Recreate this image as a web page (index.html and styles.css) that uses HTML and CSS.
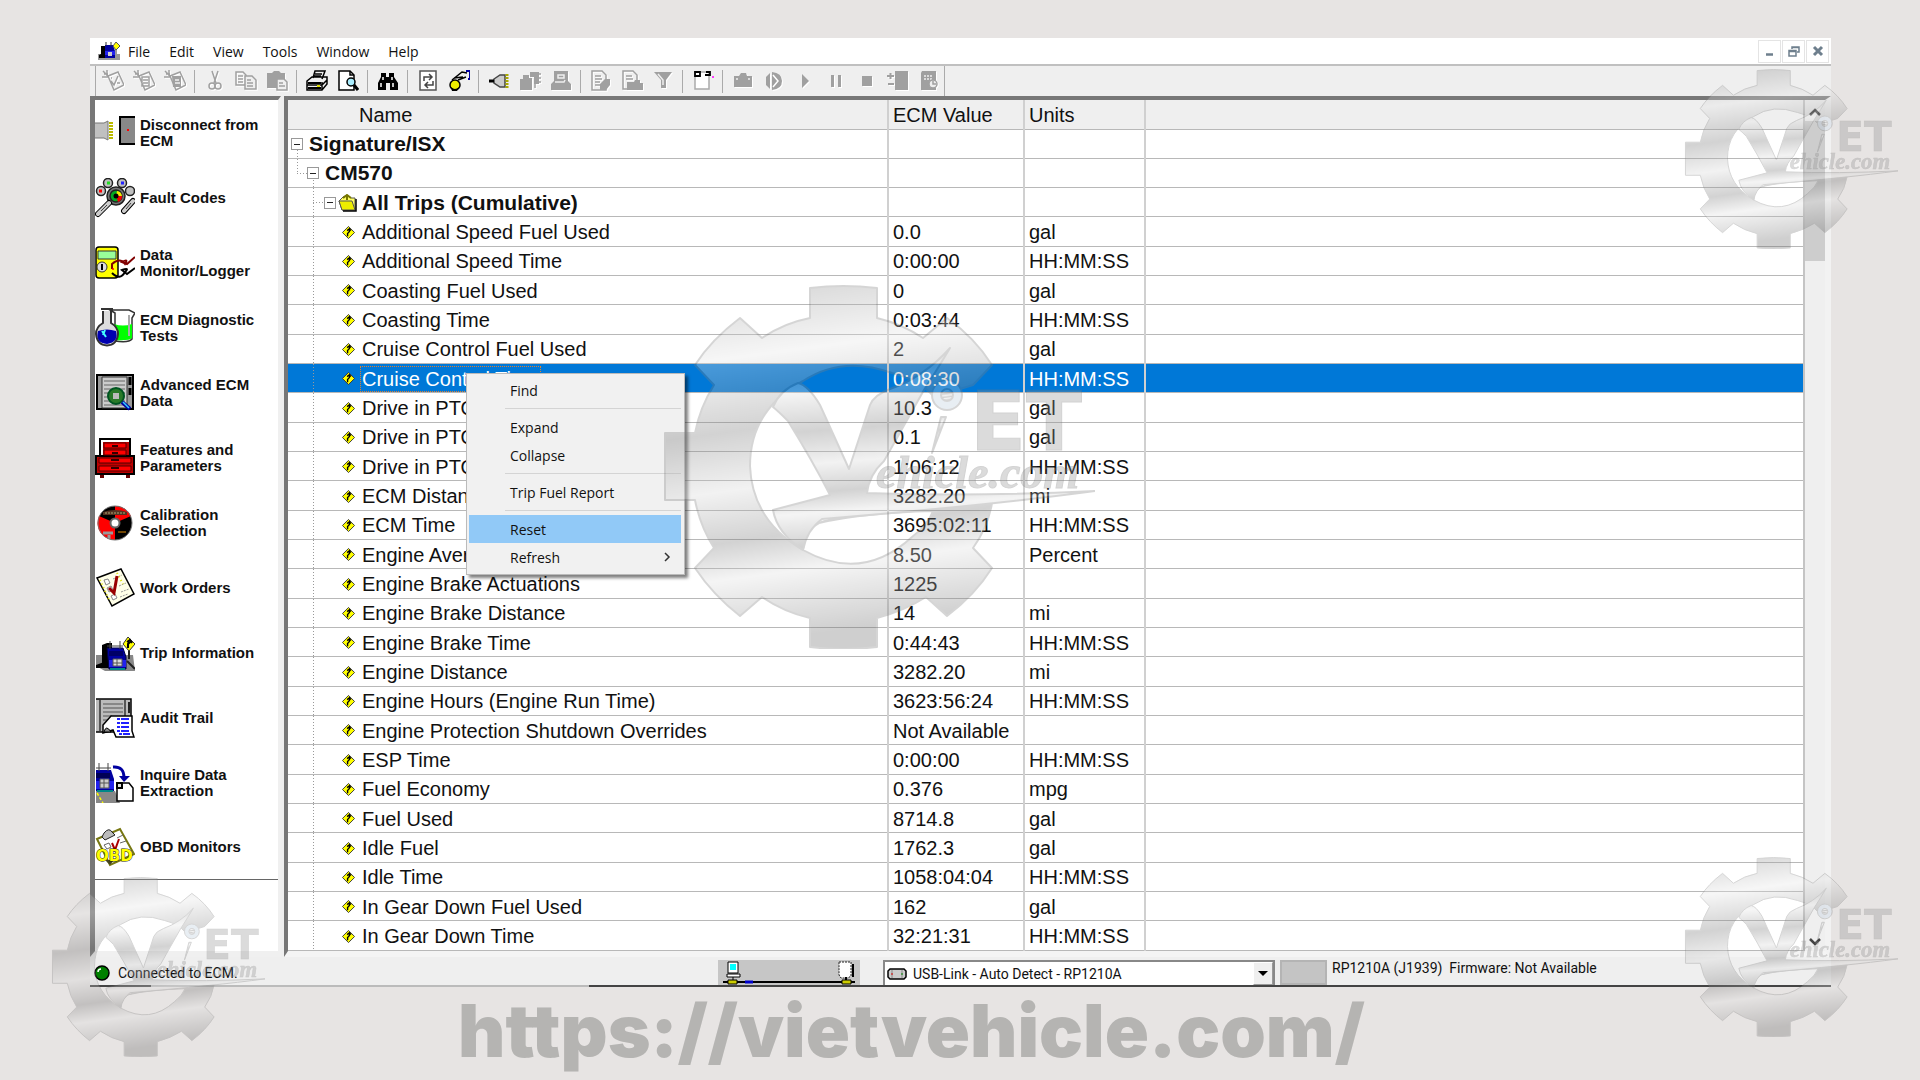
FILE: index.html
```html
<!DOCTYPE html>
<html lang="en">
<head>
  <meta charset="UTF-8" />
  <meta name="viewport" content="width=device-width, initial-scale=1" />
  <title>Trip Information</title>
  <link rel="stylesheet" href="styles.css">
</head>
<body>
  <!-- shared shapes -->
  <svg class="defs" width="0" height="0" aria-hidden="true">
    <defs>
      <linearGradient id="metal" x1="0" y1="0" x2="0.12" y2="1">
        <stop offset="0" stop-color="#777" />
        <stop offset="0.22" stop-color="#e6e6e6" />
        <stop offset="0.42" stop-color="#777" />
        <stop offset="0.58" stop-color="#d8d8d8" />
        <stop offset="0.72" stop-color="#777" />
        <stop offset="0.82" stop-color="#e0e0e0" />
        <stop offset="1" stop-color="#6c6c6c" />
      </linearGradient>
      <symbol id="trip" viewBox="0 0 14 14">
        <path d="M7 0.5 13.5 7 7 13.5 0.5 7Z" fill="#ff0" stroke="#333" />
        <path d="M6 11V8L8 6V3M5.500 5 8 3 9.500 5" fill="none" stroke="#000" stroke-width="1.500" />
      </symbol>
      <symbol id="logo" viewBox="0 0 433 364">
        <g fill="url(#metal)" stroke="#808080" stroke-width="2" stroke-linejoin="round">
          <path fill-rule="evenodd" d="M148 3Q181 -1 215 3V33Q240 39 261 53L285 33Q313 53 330 80L311 100L272 112Q258 95 230 88Q180 70 141 96Q88 125 88 181Q90 235 141 265Q143 245 157 238Q180 228 330 218Q326 242 311 263L330 283Q313 310 285 331L264 312Q242 326 215 333V362Q181 366 148 362V333Q122 327 100 312L78 331Q51 310 33 283L52 263Q38 241 33 215H3V148H33Q38 122 52 100L33 80Q49 55 78 33L100 53Q122 38 148 33ZM141 265Q200 298 250 252Q266 240 271 226Q200 228 157 238Q143 245 141 265Z" />
          <path d="M111 122Q118 105 136 98Q146 100 158 120L187 184L208 120Q212 110 228 104Q262 92 288 63Q278 80 262 105L222 176Q207 190 205 208Q310 212 433 206Q330 220 160 234Q145 245 141 265Q115 248 111 225L168 210Q150 175 126 136Q116 126 111 122Z" />
          <circle cx="285" cy="110" r="15" fill="#bcd" />
          <circle cx="285" cy="110" r="6" />
          <path d="M279 132 270 168 284 132Z" />
        </g>
        <g fill="#909090" stroke="#777" stroke-width="1">
          <text x="308" y="165" class="logo-et">ET</text>
          <text x="214" y="203" class="logo-com">ehicle.com</text>
        </g>
      </symbol>
    </defs>
  </svg>

  <div class="window">
    <header class="menubar">
      <svg class="app-icon" viewBox="0 0 22 18" aria-hidden="true">
        <path d="M0 12H22V18H0Z" fill="#999" /><path d="M3 4H9V16H1V13L3 12Z" fill="#000" />
        <path d="M7 3H15L17 9V16H7Z" fill="#0000a0" /><path d="M7 9H17V13H7Z" fill="#22e" />
        <path d="M10 10H14V14H10Z" fill="#ccc" /><path d="M8 0V4M13 0V4" stroke="#333" />
        <path d="M18 0 22 4 18 8 15 4Z" fill="#ff0" stroke="#555" /><path d="M18 8V12" stroke="#333" />
      </svg>
      <nav class="menus">
        <button>File</button>
        <button>Edit</button>
        <button>View</button>
        <button>Tools</button>
        <button>Window</button>
        <button>Help</button>
      </nav>
      <div class="window-buttons">
        <button aria-label="Minimize"><svg viewBox="0 0 12 12"><path d="M2 9.500H9" stroke-width="2.500" /></svg></button>
        <button aria-label="Restore"><svg viewBox="0 0 12 12"><path d="M1 5.500H8V11H1ZM1 6.500H8M4 4V2H11V7H9M4 2.500H11" /></svg></button>
        <button aria-label="Close"><svg viewBox="0 0 12 12"><path d="M2 2 10 10M10 2 2 10" stroke-width="3" /></svg></button>
      </div>
    </header>

    <div class="toolbar">
      <div class="group">
        <button aria-label="New work order"><svg class="off" viewBox="0 0 22 22"><path d="M6 6 16 2 22 15 12 20Z M1 1 6 6M0 7H6M5 0V6M2 4H6M9 11 12 15 16 6M9 8H10M15 13H18" /></svg></button>
        <button aria-label="Open work order"><svg class="off" viewBox="0 0 22 22"><path d="M6 6 16 2 22 15 12 20Z M1 1 6 6M0 7H6M5 0V6M2 4H6M9 7H16V16H9ZM10 10H15M10 13H15" /></svg></button>
        <button aria-label="Print work order"><svg class="off" viewBox="0 0 22 22"><path d="M6 6 16 2 22 15 12 20Z M1 1 6 6M0 7H6M5 0V6M2 4H6" /><path class="solid" d="M8 6H17V17H9Z" /><path d="M11 10H15M11 13H16" stroke="#eee" /></svg></button>
      </div>
      <div class="group">
        <button aria-label="Cut"><svg class="off" viewBox="0 0 22 22"><path d="M8 1 12 13M14 1 10 13" /><circle cx="8" cy="16" r="3" /><circle cx="14" cy="16" r="3" /></svg></button>
        <button aria-label="Copy"><svg class="off" viewBox="0 0 22 22"><path d="M1 2H8L11 5V15H1ZM3 6H8M3 9H8M3 12H8" /><path d="M10 6H17L21 10V19H10Z" fill="#efefef" /><path d="M12 10H16M12 13H18M12 16H18" /></svg></button>
        <button aria-label="Paste"><svg class="off" viewBox="0 0 22 22"><path class="solid" d="M1 3H6L8 1H13L15 3H19V18H1Z" /><path d="M11 9H18L21 12V20H11Z" fill="#efefef" /><path d="M13 13H17M13 16H19" /></svg></button>
      </div>
      <div class="group">
        <button aria-label="Print"><svg viewBox="0 0 22 22"><path d="M7 8 9 1H19L16 9M9 4H16M8 6H15M1 11 6 7H21V14L16 20H1ZM1 15H16L21 10M16 12V20" /><path class="solid" d="M2 12H15V14H2ZM2 17H15V19H2Z" /><path d="M11 16H14" stroke="#dd0" stroke-width="2" /></svg></button>
        <button aria-label="Print preview"><svg viewBox="0 0 22 22"><path d="M2 1H13L17 5V20H2Z" fill="#fff" /><path d="M13 1V5H17" /><circle cx="14" cy="12" r="4" fill="#aef" /><path d="M17 15 21 20" stroke-width="3" /></svg></button>
      </div>
      <div class="group">
        <button aria-label="Find"><svg viewBox="0 0 22 22"><path class="solid" d="M4 3H9V7H12V3H17V7L21 13V20H13V13H9V20H1V13L4 7Z" /><path d="M4 13V17M16 13V17M6 7V10M15 7V10" stroke="#fff" /></svg></button>
      </div>
      <div class="group">
        <button aria-label="Refresh"><svg viewBox="0 0 22 22"><path d="M3 1H19V20H3Z" fill="#fff" stroke="#555" /><path d="M7 11V7H14M12 4 15 7 12 10M16 11V15H8M11 12 8 15 11 18" stroke="#444" /></svg></button>
        <button aria-label="Reset data"><svg viewBox="0 0 22 22"><circle cx="7" cy="15" r="5" fill="#ee0" /><path class="solid" d="M3 17Q7 21 11 17L9 21H4Z" /><path d="M4 10 14 2 19 3M10 10 18 7M6 8 15 7" stroke-width="1.500" /><path d="M18 1H22V9H20" stroke="#0000a0" stroke-width="2" /></svg></button>
      </div>
      <div class="group">
        <button aria-label="Connect"><svg viewBox="0 0 22 22"><path d="M6 9 12 5H17V17H12L6 13Z" fill="#ccc" stroke="#444" /><path d="M1 11H6" stroke-width="3" /><path d="M19 4V18" stroke="#aa0" stroke-width="3" stroke-dasharray="2 1" /></svg></button>
        <button aria-label="Read ECM"><svg class="off" viewBox="0 0 22 22"><path class="solid" d="M1 9H4V5H10V8H13V20H1ZM11 2H20V14H15V7H11Z" /><path d="M16 2V18M20 4H22M20 8H22M20 12H22" /></svg></button>
        <button aria-label="Write ECM"><svg class="off" viewBox="0 0 22 22"><path class="solid" d="M4 1H18V11L21 14V20H1V14L4 11Z" /><path d="M8 5H14V8H8ZM5 12H14L15 10" stroke="#eee" /></svg></button>
      </div>
      <div class="group">
        <button aria-label="Edit report"><svg class="off" viewBox="0 0 22 22"><path d="M2 1H12L16 5V20H2ZM5 6H11M5 9H12M5 12H10M5 15H10" /><path class="solid" d="M10 14 15 9H20V15L16 20H10Z" /></svg></button>
        <button aria-label="Print report"><svg class="off" viewBox="0 0 22 22"><path d="M2 1H12L16 5V19H2ZM5 6H11M5 9H12" /><path class="solid" d="M6 12H13L14 10H19V13H22V20H6Z" /></svg></button>
        <button aria-label="Filter"><svg class="off" viewBox="0 0 22 22"><path class="solid" d="M2 2H20L14 10V18H9V10Z" /><path d="M6 4 11 10V15" stroke="#eee" /></svg></button>
      </div>
      <div class="group">
        <button aria-label="New template"><svg viewBox="0 0 22 22"><path d="M3 2V19H17V2Z" fill="#fff" stroke="#aaa" /><path d="M3 2H8V6H3ZM14 2H18V5H13" stroke-width="1.800" /><path d="M20 7H22" stroke="#f0f" /></svg></button>
      </div>
      <div class="group">
        <button aria-label="Snapshot"><svg class="off" viewBox="0 0 22 22"><path class="solid" d="M2 6H7L9 3H14L15 6H20V17H2Z" /><path d="M4 9H6M16 9H18" stroke="#eee" /></svg></button>
        <button aria-label="Step"><svg class="off" viewBox="0 0 22 22"><path class="solid" d="M7 3V19L3 15V7ZM9 2Q19 3 19 11Q19 19 9 20Z" /><path d="M10 5 15 11 10 17" stroke="#fff" /></svg></button>
        <button aria-label="Play"><svg class="off" viewBox="0 0 22 22"><path class="solid" d="M8 4 15 11 8 18Z" /></svg></button>
        <button aria-label="Pause"><svg class="off" viewBox="0 0 22 22"><path class="solid" d="M6 5H9V17H6ZM13 5H16V17H13Z" /></svg></button>
        <button aria-label="Stop"><svg class="off" viewBox="0 0 22 22"><path class="solid" d="M6 6H16V16H6Z" /></svg></button>
        <button aria-label="Add parameter"><svg class="off" viewBox="0 0 22 22"><path class="solid" d="M8 1H21V20H8Z" /><path d="M0 6H7M3.500 3V9M1 14H7M9 10H11" stroke-width="2" /></svg></button>
        <button aria-label="Schedule"><svg class="off" viewBox="0 0 22 22"><path class="solid" d="M4 1H18V20H3V3Z" /><path d="M6 6H15M6 9H14" stroke="#eee" stroke-dasharray="2 1" /><circle cx="15" cy="14" r="4" fill="#eee" /><path d="M15 11V14H18" /></svg></button>
      </div>
    </div>

    <div class="panes">
      <aside class="sidebar">
        <button class="task">
          <svg viewBox="0 0 40 40"><path d="M0 10H9L13 8V27L9 25H0" fill="#c0c0c0" stroke="#777" /><path d="M16 9V27" stroke="#bb0" stroke-width="4" stroke-dasharray="2 1" /><path d="M40 4H25V31H40" fill="#888" stroke="#000" stroke-width="2" /><path d="M32 17H34" stroke="#f00" stroke-width="2" /></svg>
          <span>Disconnect from ECM</span>
        </button>
        <button class="task">
          <svg viewBox="0 0 40 40"><g fill="#c0c0c0" stroke="#222" stroke-width="1.500"><circle cx="13" cy="5" r="4.500" /><circle cx="27" cy="5" r="4.500" /><circle cx="6" cy="13" r="4.500" /><circle cx="35" cy="13" r="4.500" /><circle cx="21" cy="18" r="9" fill="#777" /><circle cx="21" cy="18" r="6" fill="#0a2" /></g><path d="M22 13A6 6 0 0 1 27 18L21 18Z" fill="#ee0" /><path d="M27 18A6 6 0 0 1 23 24L21 18Z" fill="#e00" /><circle cx="21" cy="18" r="2.500" /><path d="M14 25 3 36M38 23 29 33" stroke="#000" stroke-width="6" stroke-linecap="round" /><path d="M14 25 3 36M38 23 29 33" stroke="#ccc" stroke-width="4" stroke-linecap="round" /><path d="M12 27 6 33M36 25 31 31" stroke="#444" /><path d="M12 5H15" stroke="#2d2" stroke-width="3" /><path d="M26 5H29" stroke="#22f" stroke-width="3" /><path d="M4 13H7" stroke="#f00" stroke-width="3" /></svg>
          <span>Fault Codes</span>
        </button>
        <button class="task">
          <svg viewBox="0 0 40 40"><rect x="1" y="4" width="22" height="31" rx="3" fill="#ff0" stroke="#000" stroke-width="1.500" /><path d="M3 8H21V16H3Z" fill="#9f9" stroke="#333" /><circle cx="7" cy="24" r="5" fill="#ddd" stroke="#333" /><path d="M7 21V27" stroke="#000" stroke-width="2" /><path d="M17 26V21Q25 14 30 21Q34 15 27 19L32 21 40 14" fill="none" stroke="#800000" stroke-width="2" /><path d="M17 30Q25 38 30 29Q35 24 27 27L32 31 40 25" fill="none" stroke="#000" stroke-width="2" /><circle cx="18" cy="26" r="1" fill="#f00" /></svg>
          <span>Data Monitor/Logger</span>
        </button>
        <button class="task">
          <svg viewBox="0 0 40 40"><path d="M15 2H34L40 5L37 10V31Q34 35 20 33V5Z" fill="#fff" stroke="#333" stroke-width="1.500" /><path d="M19 16Q28 19 37 16V30Q34 33 20 32Z" fill="#0f0" /><path d="M34 7V28" stroke="#aaa" stroke-width="2" /><path d="M6 1H18M8 3V15Q1 19 1 26Q2 37 12 37.500Q22 37 23 26Q23 19 16 15V3" fill="#ddd" stroke="#333" stroke-width="2" /><path d="M3 23Q12 20 21 23Q24 34 12 36Q0 35 3 23Z" fill="#0000b0" /><path d="M7 23 11 29M8 27 10 22" stroke="#4ff" stroke-width="2" /></svg>
          <span>ECM Diagnostic Tests</span>
        </button>
        <button class="task">
          <svg viewBox="0 0 40 40"><path d="M2 2H38V36H2Z" fill="#999" stroke="#000" stroke-width="2" /><path d="M7 4H32V35H7Z" fill="#ccc" stroke="#333" /><path d="M9 8H30M9 12H30M9 16H30M9 20H30M9 24H30M9 28H30M9 32H30" stroke="#888" stroke-width="1.500" /><path d="M35 4V12M35 15V22" stroke="#000" stroke-width="3" /><circle cx="21" cy="23" r="8" fill="#297a29" stroke="#052" stroke-width="2" /><path d="M18 20H24V26H18Z" fill="#bbb" /><path d="M27 29 35 36" stroke="#0000a0" stroke-width="4" /><path d="M28 29 34 35" stroke="#3cf" stroke-width="1.500" /></svg>
          <span>Advanced ECM Data</span>
        </button>
        <button class="task">
          <svg viewBox="0 0 40 40"><path d="M5 1H35V18H5Z" fill="#b00" stroke="#000" stroke-width="2" /><path d="M6 2H34V4H8V18H6Z" fill="#fff" /><path d="M1 18H39V36H1Z" fill="#b00" stroke="#000" stroke-width="2" /><path d="M9 5H31V10H9ZM9 12H31V17H9ZM4 20H36V25H4ZM4 28H36V33H4Z" fill="#f00" stroke="#500" /><path d="M17 8H23M17 15H23M16 22H24M16 30H24" stroke="#300" stroke-width="2" /><path d="M5 37H9V40H5ZM31 37H35V40H31Z" fill="#600" /></svg>
          <span>Features and Parameters</span>
        </button>
        <button class="task">
          <svg viewBox="0 0 40 40"><circle cx="20" cy="20" r="17" /><path d="M20 20V37A17 17 0 0 1 4 13ZM20 20V3A17 17 0 0 1 36 13Z" fill="#f00" /><path d="M8 9Q20 5 32 9V12H8Z" fill="#532" /><path d="M10 10H30" stroke="#aa7" stroke-dasharray="2 1" /><path d="M8 30H18M14 32V36" stroke="#999" stroke-width="3" /><path d="M23 29H31" stroke="#d80" /><circle cx="20" cy="20" r="4.500" fill="#fff" stroke="#666" stroke-width="2" /><circle cx="20" cy="20" r="17" fill="none" stroke="#777" /></svg>
          <span>Calibration Selection</span>
        </button>
        <button class="task">
          <svg viewBox="0 0 40 40"><path d="M2 10 26 1 39 26 17 38Z" fill="#ffffe8" stroke="#000" stroke-width="1.500" /><path d="M9 12 13 11 15 15 11 17ZM12 20 16 18 18 22 14 24ZM16 28 20 26 22 30 18 32Z" fill="#fff" stroke="#888" /><path d="M18 11 27 7M24 18 31 15M26 24 34 21M25 29 33 26" stroke="#999" stroke-dasharray="2 1" /><path d="M5 12 15 34M22 5 28 16" stroke="#dd0" stroke-dasharray="1 3" stroke-width="2" /><path d="M14 20 19 25 22 8" fill="none" stroke="#900" stroke-width="3" /></svg>
          <span>Work Orders</span>
        </button>
        <button class="task">
          <svg viewBox="0 0 40 40"><path d="M1 22H38L40 38H10L1 33Z" fill="#888" /><path d="M7 12 12 10H17V35H7Z" /><path d="M1 32 9 29V35H1Z" /><path d="M12 15H28L31 24V36H14Z" fill="#0000a0" stroke="#000044" /><path d="M14 18H28V23H14Z" fill="#000066" /><path d="M14 27H31V34H14Z" fill="#22e" /><path d="M18 26H27V33H18Z" fill="#ddd" stroke="#555" /><path d="M18 30H27M22 26V33" stroke="#555" /><path d="M15 36H30" stroke="#088" stroke-width="2" /><path d="M15 8V16M25 8V16M12 13H28" stroke="#444" /><path d="M34 18V26M32 28 40 36" stroke="#222" stroke-width="2" /><path d="M33 4 40 11 34 18 28 11Z" fill="#ff0" stroke="#333" /><path d="M33 15V11L35 9M32 9 35 7 37 10" fill="none" stroke="#000" stroke-width="2" /></svg>
          <span>Trip Information</span>
        </button>
        <button class="task">
          <svg viewBox="0 0 40 40"><path d="M1 1H36V20H20V34H1" fill="#bbb" stroke="#000" stroke-width="1.500" /><path d="M5 2V33M30 2V18" stroke="#555" stroke-width="2" /><path d="M8 6H28M8 10H28M8 14H28M8 18H17M8 22H15" stroke="#777" stroke-width="1.500" /><path d="M34 4V15" stroke="#222" stroke-width="2" /><path d="M8 35V27L16 18H37V33L39 39H21L18 32 8 35Z" fill="#fff" stroke="#000" stroke-width="1.500" /><path d="M9 34Q11 26 16 34Z" fill="#888" stroke="#000" /><path d="M22 21H34M22 25H34M22 29H34M22 33H34M24 36H35" stroke="#22f" stroke-width="2" stroke-dasharray="3 1 8 1" /></svg>
          <span>Audit Trail</span>
        </button>
        <button class="task">
          <svg viewBox="0 0 40 40"><path d="M1 28H20L25 40H1Z" fill="#888" /><path d="M2 30 8 40" stroke="#ff0" stroke-dasharray="3 2" stroke-width="1.500" /><path d="M1 7H16L19 16V28H1Z" fill="#0000a0" /><path d="M1 10H15V15H1Z" fill="#000055" /><path d="M1 18H19V26H1Z" fill="#22e" /><path d="M5 16H14V25H5Z" fill="#ccc" stroke="#555" /><path d="M5 20H14M9 16V25" stroke="#555" /><path d="M4 0V8M13 0V8M1 5H16" stroke="#444" /><path d="M2 28H18" stroke="#088" stroke-width="2" /><path d="M18 4Q29 3 29 15" fill="none" stroke="#0000a0" stroke-width="3" /><path d="M24 13H35L29 19Z" fill="#0000a0" /><path d="M22 20H34L38 25V38H22Z" fill="#fff" stroke="#000" stroke-width="1.500" /><path d="M22 20H27V25H22Z" fill="#ddd" stroke="#000" stroke-width="2" /></svg>
          <span>Inquire Data Extraction</span>
        </button>
        <button class="task">
          <svg viewBox="0 0 40 40"><path d="M2 12 25 2 39 27 15 38Z" fill="#fff" stroke="#777711" stroke-width="2" /><path d="M9 6Q14 0 17 5L20 8 10 13 7 10Z" fill="#bbb" stroke="#222" /><path d="M9 18 14 16 16 20 12 22ZM22 11 28 8M25 16 31 14" stroke="#666" fill="none" /><path d="M17 16 20 23 24 12" fill="none" stroke="#a00" stroke-width="2" /><path d="M10 33H19L15 38Z" fill="#442" /><text x="1" y="34" class="obd">OBD</text></svg>
          <span>OBD Monitors</span>
        </button>
      </aside>

      <main class="content">
        <div class="grid">
          <table>
            <colgroup><col class="c-name"><col class="c-value"><col class="c-units"><col></colgroup>
            <thead>
              <tr><th>Name</th><th>ECM Value</th><th>Units</th><th></th></tr>
            </thead>
            <tbody>
              <tr class="lvl0"><td><div class="node"><button class="toggle" aria-label="Collapse Signature/ISX"></button><b>Signature/ISX</b></div></td><td></td><td></td><td></td></tr>
              <tr class="lvl1"><td><div class="node"><button class="toggle" aria-label="Collapse CM570"></button><b>CM570</b></div></td><td></td><td></td><td></td></tr>
              <tr class="lvl2"><td><div class="node"><button class="toggle" aria-label="Collapse All Trips"></button><svg class="folder" viewBox="0 0 20 18"><path d="M1 7 5 3 9 1 13 4H17V16H4Z" fill="#ffff60" stroke="#555" /><path d="M1 7H14L17 16H4Z" fill="#ee0" stroke="#555" /><path d="M5 4 9 1 13 4M9 1V6" fill="none" stroke="#770" stroke-width="2" /><path d="M18 5V17H5" fill="none" stroke="#000" stroke-width="1.500" /></svg><b>All Trips (Cumulative)</b></div></td><td></td><td></td><td></td></tr>
              <tr><td><div class="node"><svg><use href="#trip" /></svg><span>Additional Speed Fuel Used</span></div></td><td>0.0</td><td>gal</td><td></td></tr>
              <tr><td><div class="node"><svg><use href="#trip" /></svg><span>Additional Speed Time</span></div></td><td>0:00:00</td><td>HH:MM:SS</td><td></td></tr>
              <tr><td><div class="node"><svg><use href="#trip" /></svg><span>Coasting Fuel Used</span></div></td><td>0</td><td>gal</td><td></td></tr>
              <tr><td><div class="node"><svg><use href="#trip" /></svg><span>Coasting Time</span></div></td><td>0:03:44</td><td>HH:MM:SS</td><td></td></tr>
              <tr><td><div class="node"><svg><use href="#trip" /></svg><span>Cruise Control Fuel Used</span></div></td><td>2</td><td>gal</td><td></td></tr>
              <tr class="selected"><td><div class="node"><svg><use href="#trip" /></svg><span>Cruise Control Time</span></div></td><td>0:08:30</td><td>HH:MM:SS</td><td></td></tr>
              <tr><td><div class="node"><svg><use href="#trip" /></svg><span>Drive in PTO</span></div></td><td>10.3</td><td>gal</td><td></td></tr>
              <tr><td><div class="node"><svg><use href="#trip" /></svg><span>Drive in PTO</span></div></td><td>0.1</td><td>gal</td><td></td></tr>
              <tr><td><div class="node"><svg><use href="#trip" /></svg><span>Drive in PTO</span></div></td><td>1:06:12</td><td>HH:MM:SS</td><td></td></tr>
              <tr><td><div class="node"><svg><use href="#trip" /></svg><span>ECM Distance</span></div></td><td>3282.20</td><td>mi</td><td></td></tr>
              <tr><td><div class="node"><svg><use href="#trip" /></svg><span>ECM Time</span></div></td><td>3695:02:11</td><td>HH:MM:SS</td><td></td></tr>
              <tr><td><div class="node"><svg><use href="#trip" /></svg><span>Engine Average</span></div></td><td>8.50</td><td>Percent</td><td></td></tr>
              <tr><td><div class="node"><svg><use href="#trip" /></svg><span>Engine Brake Actuations</span></div></td><td>1225</td><td></td><td></td></tr>
              <tr><td><div class="node"><svg><use href="#trip" /></svg><span>Engine Brake Distance</span></div></td><td>14</td><td>mi</td><td></td></tr>
              <tr><td><div class="node"><svg><use href="#trip" /></svg><span>Engine Brake Time</span></div></td><td>0:44:43</td><td>HH:MM:SS</td><td></td></tr>
              <tr><td><div class="node"><svg><use href="#trip" /></svg><span>Engine Distance</span></div></td><td>3282.20</td><td>mi</td><td></td></tr>
              <tr><td><div class="node"><svg><use href="#trip" /></svg><span>Engine Hours (Engine Run Time)</span></div></td><td>3623:56:24</td><td>HH:MM:SS</td><td></td></tr>
              <tr><td><div class="node"><svg><use href="#trip" /></svg><span>Engine Protection Shutdown Overrides</span></div></td><td>Not Available</td><td></td><td></td></tr>
              <tr><td><div class="node"><svg><use href="#trip" /></svg><span>ESP Time</span></div></td><td>0:00:00</td><td>HH:MM:SS</td><td></td></tr>
              <tr><td><div class="node"><svg><use href="#trip" /></svg><span>Fuel Economy</span></div></td><td>0.376</td><td>mpg</td><td></td></tr>
              <tr><td><div class="node"><svg><use href="#trip" /></svg><span>Fuel Used</span></div></td><td>8714.8</td><td>gal</td><td></td></tr>
              <tr><td><div class="node"><svg><use href="#trip" /></svg><span>Idle Fuel</span></div></td><td>1762.3</td><td>gal</td><td></td></tr>
              <tr><td><div class="node"><svg><use href="#trip" /></svg><span>Idle Time</span></div></td><td>1058:04:04</td><td>HH:MM:SS</td><td></td></tr>
              <tr><td><div class="node"><svg><use href="#trip" /></svg><span>In Gear Down Fuel Used</span></div></td><td>162</td><td>gal</td><td></td></tr>
              <tr><td><div class="node"><svg><use href="#trip" /></svg><span>In Gear Down Time</span></div></td><td>32:21:31</td><td>HH:MM:SS</td><td></td></tr>
            </tbody>
          </table>
        </div>
        <div class="scrollbar">
          <button aria-label="Scroll up"><svg viewBox="0 0 12 8"><path d="M1 7 6 2 11 7" /></svg></button>
          <div class="thumb"></div>
          <button aria-label="Scroll down"><svg viewBox="0 0 12 8"><path d="M1 1 6 6 11 1" /></svg></button>
        </div>

        <div class="context-menu" role="menu">
          <button role="menuitem">Find</button>
          <hr>
          <button role="menuitem">Expand</button>
          <button role="menuitem">Collapse</button>
          <hr>
          <button role="menuitem">Trip Fuel Report</button>
          <hr>
          <button role="menuitem" class="active">Reset</button>
          <button role="menuitem">Refresh <svg viewBox="0 0 8 12"><path d="M2 2 6 6 2 10" /></svg></button>
        </div>
      </main>
    </div>

    <footer class="statusbar">
      <div class="status">
        <svg viewBox="0 0 16 16"><circle cx="8" cy="8" r="7" fill="#008000" stroke="#000" stroke-width="1.500" /><path d="M4 7Q4 4 7 4" fill="none" stroke="#fff" stroke-width="1.500" /></svg>
        Connected to ECM.
      </div>
      <svg class="network" viewBox="0 0 142 25" aria-hidden="true">
        <path d="M5 22H137" stroke="#000" stroke-width="2" /><path d="M10 2H20V13H10Z" fill="#fff" stroke="#000" /><path d="M12 4H18V10H12Z" fill="#0ff" /><path d="M9 14H22V17H9ZM15 17V20" fill="#fff" stroke="#000" /><path d="M10 20H19V24H10ZM124 20H133V24H124Z" fill="#cc0" stroke="#000" /><path d="M27 22H35" stroke="#00c" stroke-width="3" /><path d="M121 2H133V16L130 18H123L121 15Z" fill="#fff" stroke="#222" stroke-dasharray="2 1" /><path d="M135 4V17M128 17V20" stroke="#000" stroke-width="2" />
      </svg>
      <div class="combo">
        <svg viewBox="0 0 20 14" aria-hidden="true"><path d="M3 2H17L19 4V10L17 12H3L1 10V4Z" fill="#ccc" stroke="#000" stroke-width="1.500" /><path d="M5 3V11M15 3V11" stroke="#888" /><path d="M4 7H6" stroke="#d00" /><path d="M14 7H16" stroke="#080" /></svg>
        <select aria-label="Adapter">
          <option>USB-Link - Auto Detect - RP1210A</option>
        </select>
        <span class="combo-arrow"></span>
      </div>
      <div class="lamp"></div>
      <div class="firmware">RP1210A (J1939)&nbsp; Firmware: Not Available</div>
    </footer>
  </div>

  <a class="site" href="https://vietvehicle.com/">https://vietvehicle.com/</a>

  <svg class="watermark center" aria-hidden="true"><use href="#logo" /></svg>
  <svg class="watermark top-right" aria-hidden="true"><use href="#logo" /></svg>
  <svg class="watermark bottom-left" aria-hidden="true"><use href="#logo" /></svg>
  <svg class="watermark bottom-right" aria-hidden="true"><use href="#logo" /></svg>
</body>
</html>
```
FILE: styles.css
```css
* {
  box-sizing: border-box;
}

body {
  margin: 0;
  min-height: 100vh;
  padding: 38px 89px 0 90px;
  display: flex;
  flex-direction: column;
  position: relative;
  background: #e7e4e3;
  color: #111;
  font-family: "Liberation Sans", Arial, sans-serif;
}

button {
  border: 0;
  padding: 0;
  background: none;
  color: inherit;
  font: inherit;
}

.defs {
  position: absolute;
}

.window {
  flex: 1;
  display: flex;
  flex-direction: column;
  background: #efefef;
}

/* menu bar */
.menubar {
  display: flex;
  align-items: center;
  height: 28px;
  padding: 0 2px 0 8px;
  background: #fff;
  border-bottom: 2px solid #c0c0c0;
  font: 14px "Open Sans", "Noto Sans", sans-serif;
}

.app-icon {
  width: 22px;
  height: 18px;
}

.menus {
  display: flex;
  gap: 19px;
  margin-left: 8px;
}

.window-buttons {
  display: flex;
  gap: 1px;
  margin-left: auto;
}

.window-buttons button {
  display: grid;
  place-items: center;
  width: 23px;
  height: 23px;
  border: 1px solid #e4e4e4;
}

.window-buttons svg {
  width: 12px;
  height: 12px;
  fill: none;
  stroke: #6e7f8d;
  stroke-width: 1.500;
}

/* toolbar */
.toolbar {
  display: flex;
  align-items: center;
  align-self: flex-start;
  height: 30px;
  padding-left: 1px;
  margin-left: 5px;
  border-left: 1px solid #aaa;
  border-right: 1px solid #aaa;
}

.group {
  display: flex;
}

.group + .group {
  margin-left: 4px;
  padding-left: 4px;
  border-left: 1px solid #aaa;
}

.group button {
  display: grid;
  place-items: center;
  width: 31px;
  height: 23px;
}

.group svg {
  width: 22px;
  height: 22px;
  fill: none;
  stroke: #000;
  stroke-width: 1.500;
}

.group .solid {
  fill: #000;
  stroke: none;
}

.group .off {
  stroke: #a0a0a0;
  filter: drop-shadow(1px 1px 0 #fff);
}

.off .solid {
  fill: #a0a0a0;
}

/* panes */
.panes {
  flex: 1;
  display: flex;
  gap: 3px;
}

.sidebar {
  width: 191px;
  border: 4px solid #777;
  border-left-width: 5px;
  border-right: 3px solid #f0f0f0;
  border-bottom: 6px solid #f0f0f0;
  background: #fff;
}

.task {
  display: flex;
  align-items: center;
  gap: 5px;
  width: 100%;
  height: 65px;
  text-align: left;
  font-size: 15px;
  font-weight: bold;
  line-height: 16px;
}

.task:last-child {
  border-bottom: 1px solid #666;
}

.task svg {
  flex: none;
  width: 40px;
  height: 40px;
}

.obd {
  font: 900 15px "DejaVu Sans", sans-serif;
  fill: #ff0;
  stroke: #220;
  stroke-width: 1px;
  paint-order: stroke;
}

.content {
  flex: 1;
  display: flex;
  position: relative;
  border: 4px solid #777;
  border-right: 6px solid #f2f2f2;
  border-bottom: 6px solid #f4f4f4;
  background: #fff;
}

.grid {
  flex: 1;
  display: grid;
}

table {
  width: 100%;
  height: 100%;
  table-layout: fixed;
  border-collapse: collapse;
  font-size: 20px;
  line-height: 24px;
}

.c-name {
  width: 600px;
}

.c-value {
  width: 136px;
}

.c-units {
  width: 121px;
}

th,
td {
  padding: 1px 0 0 4px;
  border-bottom: 1px solid #b8b8b8;
  border-right: 2px solid #d0d0d0;
  text-align: left;
  font-weight: normal;
  white-space: nowrap;
}

th {
  height: 29px;
  background: #efefef;
}

th:first-child {
  padding-left: 71px;
}

td:first-child {
  padding-left: 0;
  background: repeating-linear-gradient(#999 0 1px, transparent 1px 3px) 25px 0 / 1px 100% no-repeat;
}

th:last-child,
td:last-child {
  border-right: 0;
}

.node {
  display: flex;
  align-items: center;
  padding-left: 54px;
}

.node > svg {
  width: 13px;
  height: 13px;
  margin-right: 6px;
}

.node > span {
  padding: 0 1px;
}

.node b {
  font-size: 21px;
}

.toggle {
  width: 12px;
  height: 12px;
  margin-right: 6px;
  border: 1px solid #999;
  background: linear-gradient(#222, #222) center / 6px 1px no-repeat #fff;
}

.lvl0 .node {
  padding-left: 3px;
}

.lvl1 .node {
  padding-left: 19px;
}

.lvl2 .node {
  padding-left: 36px;
}

.lvl2 .toggle {
  margin-right: 2px;
}

.node > .folder {
  width: 20px;
  height: 18px;
  margin-right: 4px;
}

.lvl0 td:first-child {
  background: repeating-linear-gradient(#999 0 1px, transparent 1px 3px) 9px 20px / 1px 100% no-repeat;
}

.lvl1 td:first-child {
  background:
    repeating-linear-gradient(#999 0 1px, transparent 1px 3px) 9px 0 / 1px 14px no-repeat,
    repeating-linear-gradient(90deg, #999 0 1px, transparent 1px 3px) 9px 14px / 12px 1px no-repeat,
    repeating-linear-gradient(#999 0 1px, transparent 1px 3px) 25px 18px / 1px 100% no-repeat;
}

.lvl2 td:first-child {
  background:
    repeating-linear-gradient(#999 0 1px, transparent 1px 3px) 25px 0 / 1px 100% no-repeat,
    repeating-linear-gradient(90deg, #999 0 1px, transparent 1px 3px) 25px 14px / 12px 1px no-repeat;
}

.selected {
  background: #0078d7;
  color: #fff;
}

.selected span {
  outline: 1px dotted #e08030;
}

.scrollbar {
  display: flex;
  flex-direction: column;
  width: 22px;
  border-left: 2px solid #c4c4c4;
  background: #efefef;
}

.scrollbar button {
  height: 21px;
}

.scrollbar button:last-child {
  margin-top: auto;
}

.scrollbar svg {
  width: 12px;
  height: 8px;
  fill: none;
  stroke: #444;
  stroke-width: 2.500;
}

.thumb {
  height: 140px;
  background: #cdcdcd;
}

/* popup over the grid */
.context-menu {
  position: absolute;
  top: 273px;
  left: 178px;
  width: 219px;
  padding: 2px 3px 3px 2px;
  border: 1px solid #bbb;
  background: #f1f1f1;
  box-shadow: 3px 3px 3px rgba(0, 0, 0, 0.5);
  font: 14px "Open Sans", "Noto Sans", sans-serif;
}

.context-menu button {
  display: flex;
  align-items: center;
  justify-content: space-between;
  width: 100%;
  height: 28px;
  padding: 0 10px 0 41px;
}

.context-menu .active {
  background: #91c9f7;
}

.context-menu hr {
  height: 1px;
  margin: 4px 0 4px 36px;
  border: 0;
  background: #d4d4d4;
}

.context-menu svg {
  width: 8px;
  height: 12px;
  fill: none;
  stroke: #333;
  stroke-width: 1.500;
}

/* status bar */
.statusbar {
  display: flex;
  align-items: center;
  height: 30px;
  padding: 3px 0 2px 4px;
  background: linear-gradient(90deg, #444 61px, #bbb 61px 499px, #444 499px) bottom / 100% 2px no-repeat #efefef;
  font-family: Roboto, sans-serif;
  font-size: 14px;
}

.status {
  display: flex;
  align-items: center;
  gap: 8px;
  width: 624px;
}

.status svg {
  width: 16px;
  height: 16px;
}

.network {
  width: 142px;
  height: 25px;
  background: #c6c6c6;
}

.combo {
  display: flex;
  align-items: center;
  width: 392px;
  height: 25px;
  margin-left: 23px;
  padding-left: 2px;
  border-top: 2px solid #888;
  border-left: 2px solid #888;
  border-right: 2px solid #888;
  background: #fff;
}

.combo > svg {
  width: 20px;
  height: 14px;
  margin-right: 6px;
}

.combo select {
  flex: 1;
  height: 100%;
  padding: 0;
  border: 0;
  appearance: none;
  background: none;
  color: #111;
  font: inherit;
}

.combo-arrow {
  display: grid;
  place-items: center;
  width: 20px;
  height: 100%;
  border: 1px solid #999;
  border-top-color: #fff;
  border-left-color: #fff;
  background: #efefef;
}

.combo-arrow::before {
  content: "";
  border: 5px solid transparent;
  border-top-color: #000;
  border-bottom: 0;
}

.lamp {
  width: 47px;
  height: 25px;
  margin: 0 5px 0 5px;
  border: 2px solid #b4b4b4;
  background: #c4c4c4;
}

.firmware {
  align-self: flex-start;
}

/* site address under the window */
.site {
  height: 93px;
  padding-left: 368px;
  color: #b5b4b2;
  font: 900 73px/88px Inter, sans-serif;
  text-decoration: none;
}

.watermark {
  position: absolute;
  width: 214px;
  height: 180px;
  opacity: 0.32;
  pointer-events: none;
}

.watermark.center {
  top: 285px;
  left: 662px;
  width: 433px;
  height: 364px;
}

.watermark.top-right {
  top: 69px;
  right: 22px;
}

.watermark.bottom-left {
  bottom: 23px;
  left: 51px;
}

.watermark.bottom-right {
  right: 22px;
  bottom: 43px;
}

.logo-et {
  font: bold 82px "DejaVu Sans", sans-serif;
}

.logo-com {
  font: italic bold 46px "Liberation Serif", serif;
}
```
